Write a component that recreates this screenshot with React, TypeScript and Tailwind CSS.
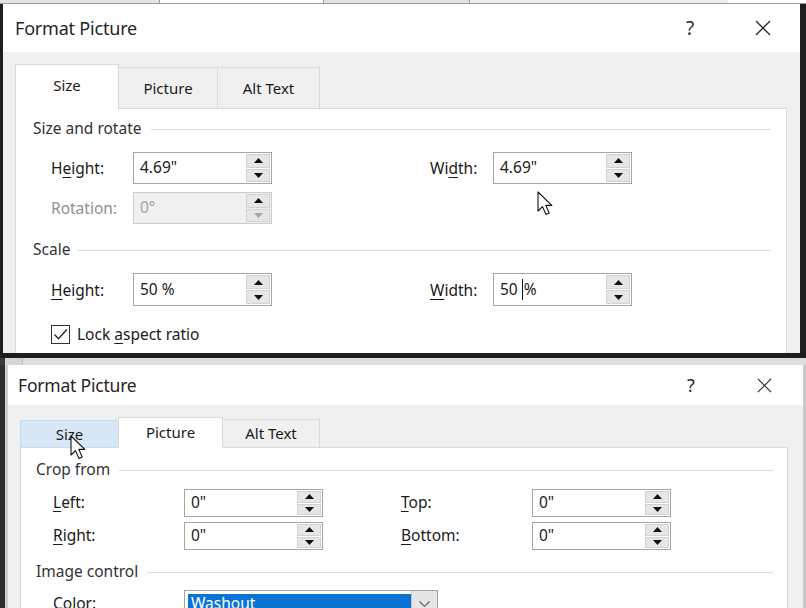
import React from "react";

type SpinProps = {
  value: React.ReactNode;
  h: number;
  disabled?: boolean;
  spinW: number;
};

function Triangle({ dir, color }: { dir: "up" | "down"; color: string }) {
  return (
    <svg width="9" height="5" viewBox="0 0 9 5">
      <path d={dir === "up" ? "M0 5 L4.5 0 L9 5 Z" : "M0 0 L4.5 5 L9 0 Z"} fill={color} />
    </svg>
  );
}

function Spin({ value, h, disabled, spinW }: SpinProps) {
  return (
    <div
      className={
        "flex w-[139px] shrink-0 border " +
        (disabled ? "border-[#cccccc] bg-[#f0f0f0] text-[#a3a3a3]" : "border-[#a5a5a5] bg-white text-[#1a1a1a]")
      }
      style={{ height: h }}
    >
      <div className="flex flex-1 items-center pl-[6px]">{value}</div>
      <div className="flex flex-col gap-[1px] p-[1px]" style={{ width: spinW }}>
        <div className="flex flex-1 items-center justify-center border border-[#d2d2d2] bg-[#e6e6e6]">
          <Triangle dir="up" color="#111" />
        </div>
        <div className="flex flex-1 items-center justify-center border border-[#d2d2d2] bg-[#e6e6e6]">
          <Triangle dir="down" color={disabled ? "#a8a8a8" : "#111"} />
        </div>
      </div>
    </div>
  );
}

function Group({ title, gap }: { title: string; gap: number }) {
  return (
    <div className="flex h-[22px] shrink-0 items-center text-[#333]">
      <span>{title}</span>
      <div className="h-px flex-1 bg-[#dcdcdc]" style={{ marginLeft: gap }} />
    </div>
  );
}

function CloseX({ size }: { size: number }) {
  return (
    <svg width={size} height={size} viewBox="0 0 16 16">
      <path d="M1 1 L15 15 M15 1 L1 15" stroke="#2b2b2b" strokeWidth="1.3" fill="none" />
    </svg>
  );
}

function Arrow() {
  return (
    <svg width="18" height="27" viewBox="0 0 18 27">
      <path
        d="M1 1 L1 20 L5.5 15.6 L9 23.5 L12.2 22 L8.8 14.4 L14.8 14.4 Z"
        fill="#fff"
        stroke="#111"
        strokeWidth="1.1"
        strokeLinejoin="round"
      />
    </svg>
  );
}

export default function App() {
  return (
    <div className="relative flex h-[608px] w-[806px] flex-col overflow-hidden bg-[#1e1e1e] font-['Noto_Sans',sans-serif] text-[15.5px] text-[#1a1a1a]">
      {/* upper window: Size tab */}
      <div className="flex h-[353px] shrink-0 flex-col overflow-hidden">
        <div className="flex h-[4px] shrink-0 border-b border-[#9d9d9d]">
          <div className="w-[159px] bg-[#e2e2e2]" />
          <div className="w-[164px] border-l border-[#9d9d9d] bg-white" />
          <div className="w-[146px] border-l border-[#9d9d9d] bg-[#e2e2e2]" />
          <div className="w-[259px] border-l border-[#9d9d9d] bg-[#ececec]" />
          <div className="flex-1 bg-white" />
        </div>
        <div className="flex min-h-0 flex-1">
          <div className="w-[3px] bg-[#1e1e1e]" />
          <div className="flex min-h-0 flex-1 flex-col bg-[#f0f0f0]">
            <div className="flex h-[48px] shrink-0 items-center bg-white pl-[12px] pr-[19px]">
              <span className="flex-1 text-[18px] tracking-[-0.2px] text-[#262626]">Format Picture</span>
              <div className="w-[36px] text-center text-[19px] text-[#2b2b2b]">?</div>
              <div className="ml-[37px] flex w-[36px] justify-center">
                <CloseX size={16} />
              </div>
            </div>
            <div className="flex min-h-0 flex-1 flex-col pl-[12px] pr-[13px] pt-[12px]">
              <div className="relative z-10 -mb-px flex shrink-0 items-end">
                <div className="flex h-[45px] w-[104px] items-center justify-center border border-b-white border-[#d9d9d9] bg-white pb-[2px] text-[15px]">
                  Size
                </div>
                <div className="-ml-px flex h-[42px] w-[100px] items-center justify-center border border-[#d9d9d9] bg-[#f0f0f0] text-[15px]">
                  Picture
                </div>
                <div className="-ml-px flex h-[42px] w-[103px] items-center justify-center border border-[#d9d9d9] bg-[#f0f0f0] text-[15px]">
                  Alt Text
                </div>
              </div>
              <div className="flex min-h-0 flex-1 flex-col border border-b-0 border-[#d9d9d9] bg-white pl-[17px] pr-[15px] pt-[9px]">
                <Group title="Size and rotate" gap={9} />
                <div className="mt-[12px] flex shrink-0 items-center pl-[18px]">
                  <span className="w-[82px] pt-[2px]">
                    H<span className="underline underline-offset-[3px]">e</span>ight:
                  </span>
                  <Spin value={'4.69"'} h={32} spinW={26} />
                  <div className="w-[158px]" />
                  <span className="w-[63px] pt-[2px]">
                    Wi<span className="underline underline-offset-[3px]">d</span>th:
                  </span>
                  <Spin value={'4.69"'} h={32} spinW={26} />
                </div>
                <div className="mt-[8px] flex shrink-0 items-center pl-[18px]">
                  <span className="w-[82px] pt-[2px] text-[#8f8f8f]">Rotation:</span>
                  <Spin value="0°" h={32} spinW={26} disabled />
                </div>
                <div className="mt-[15px] shrink-0">
                  <Group title="Scale" gap={8} />
                </div>
                <div className="mt-[12px] flex shrink-0 items-center pl-[18px]">
                  <span className="w-[82px] pt-[2px]">
                    <span className="underline underline-offset-[3px]">H</span>eight:
                  </span>
                  <Spin value="50 %" h={33} spinW={26} />
                  <div className="w-[158px]" />
                  <span className="w-[63px] pt-[2px]">
                    <span className="underline underline-offset-[3px]">W</span>idth:
                  </span>
                  <Spin
                    value={
                      <span className="flex items-center">
                        50
                        <span className="ml-[4px] inline-block h-[21px] w-px bg-[#111]" />
                        <span className="ml-[1px]">%</span>
                      </span>
                    }
                    h={33}
                    spinW={26}
                  />
                </div>
                <div className="mt-[17px] flex shrink-0 items-center pl-[18px]">
                  <div className="flex h-[19px] w-[19px] items-center justify-center border border-[#333] bg-white">
                    <svg width="15" height="13" viewBox="0 0 15 13">
                      <path d="M1.5 6.5 L5.5 10.8 L13.8 1.5" stroke="#222" strokeWidth="1.3" fill="none" />
                    </svg>
                  </div>
                  <span className="ml-[7px]">
                    Lock <span className="underline underline-offset-[3px]">a</span>spect ratio
                  </span>
                </div>
              </div>
            </div>
          </div>
          <div className="w-[6px] bg-[#1e1e1e]" />
        </div>
      </div>

      {/* divider between the two windows */}
      <div className="h-[5px] shrink-0 bg-[#1e1e1e]" />

      {/* lower window: Picture tab */}
      <div className="flex h-[250px] shrink-0 flex-col overflow-hidden">
        <div className="flex h-[7px] shrink-0">
          <div className="w-[5px] bg-[#3a3a3a]" />
          <div className="w-[18px] border-r border-[#bdbdbd] bg-[#d6d6d6]" />
          <div className="flex-1 bg-[#dedede]" />
        </div>
        <div className="flex min-h-0 flex-1">
          <div className="flex w-[8px]">
            <div className="w-[5px] bg-[#2e2e2e]" />
            <div className="w-[3px] bg-[#cfcfcf]" />
          </div>
          <div className="flex min-h-0 flex-1 flex-col bg-[#f0f0f0]">
            <div className="flex h-[40px] shrink-0 items-center bg-white pl-[10px] pr-[21px]">
              <span className="flex-1 text-[17.5px] tracking-[-0.2px] text-[#262626]">Format Picture</span>
              <div className="w-[36px] text-center text-[18px] text-[#2b2b2b]">?</div>
              <div className="ml-[37px] flex w-[36px] justify-center">
                <CloseX size={15} />
              </div>
            </div>
            <div className="flex min-h-0 flex-1 flex-col pl-[12px] pr-[15px] pt-[12px]">
              <div className="relative z-10 -mb-px flex shrink-0 items-end">
                <div className="flex h-[28px] w-[99px] items-center justify-center border border-[#c5dcf1] bg-[#d8e7f6] text-[15px]">
                  Size
                </div>
                <div className="-ml-px flex h-[31px] w-[105px] items-center justify-center border border-b-white border-[#d9d9d9] bg-white text-[15px]">
                  Picture
                </div>
                <div className="-ml-px flex h-[29px] w-[98px] items-center justify-center border border-[#d9d9d9] bg-[#f0f0f0] text-[15px]">
                  Alt Text
                </div>
              </div>
              <div className="flex min-h-0 flex-1 flex-col border border-b-0 border-[#d9d9d9] bg-white pl-[15px] pr-[14px] pt-[11px]">
                <Group title="Crop from" gap={9} />
                <div className="mt-[8px] flex shrink-0 items-center pl-[17px]">
                  <span className="w-[131px]">
                    <span className="underline underline-offset-[3px]">L</span>eft:
                  </span>
                  <Spin value={'0"'} h={28} spinW={26} />
                  <div className="w-[78px]" />
                  <span className="w-[131px]">
                    <span className="underline underline-offset-[3px]">T</span>op:
                  </span>
                  <Spin value={'0"'} h={28} spinW={26} />
                </div>
                <div className="mt-[5px] flex shrink-0 items-center pl-[17px]">
                  <span className="w-[131px]">
                    <span className="underline underline-offset-[3px]">R</span>ight:
                  </span>
                  <Spin value={'0"'} h={28} spinW={26} />
                  <div className="w-[78px]" />
                  <span className="w-[131px]">
                    <span className="underline underline-offset-[3px]">B</span>ottom:
                  </span>
                  <Spin value={'0"'} h={28} spinW={26} />
                </div>
                <div className="mt-[11px] shrink-0">
                  <Group title="Image control" gap={9} />
                </div>
                <div className="mt-[7px] flex shrink-0 items-center pl-[17px]">
                  <span className="w-[131px]">
                    <span className="underline underline-offset-[3px]">C</span>olor:
                  </span>
                  <div className="flex h-[28px] w-[254px] border border-[#a5a5a5] bg-white">
                    <div className="m-[3px] mr-0 flex flex-1 items-center bg-[#0a74d6] pl-[3px] text-white">Washout</div>
                    <div className="flex w-[26px] items-center justify-center border-l border-[#c8c8c8] bg-[#e6e6e6]">
                      <svg width="11" height="6" viewBox="0 0 11 6">
                        <path d="M0.5 0.5 L5.5 5.3 L10.5 0.5" stroke="#555" strokeWidth="1.1" fill="none" />
                      </svg>
                    </div>
                  </div>
                </div>
              </div>
            </div>
          </div>
          <div className="w-[3px] bg-[#c9c9c9]" />
        </div>
      </div>

      {/* mouse pointers */}
      <div className="absolute left-[537px] top-[191px] z-20">
        <Arrow />
      </div>
      <div className="absolute left-[70px] top-[435px] z-20">
        <Arrow />
      </div>
    </div>
  );
}
